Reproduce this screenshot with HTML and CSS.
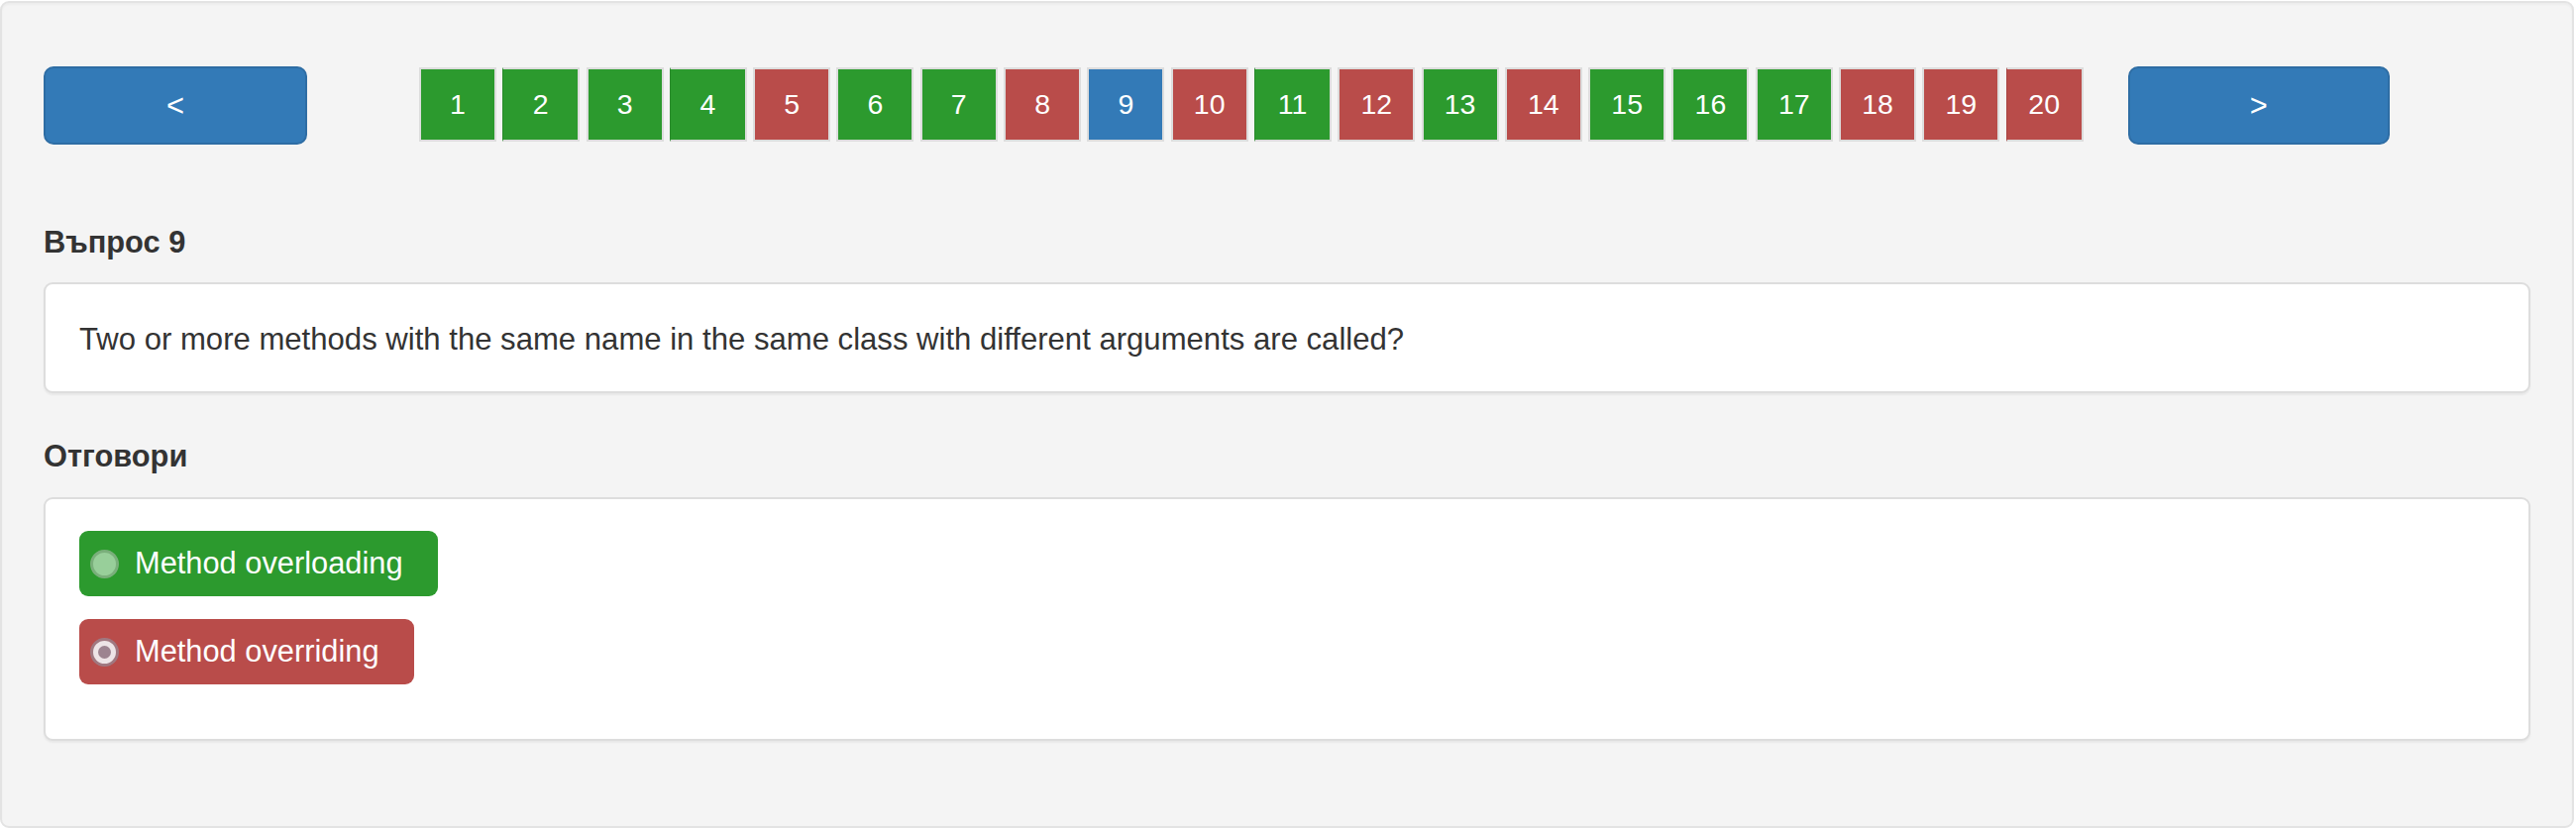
FILE: index.html
```html
<!DOCTYPE html>
<html lang="bg">
<head>
<meta charset="utf-8">
<title>Въпрос 9</title>
<link rel="stylesheet" href="styles.css">
</head>
<body>
<div class="well">
  <div class="nav">
    <button class="btn-nav">&lt;</button>
    <div class="pager">
      <span class="box ok">1</span>
      <span class="box ok edge">2</span>
      <span class="box ok">3</span>
      <span class="box ok edge">4</span>
      <span class="box bad">5</span>
      <span class="box ok">6</span>
      <span class="box ok">7</span>
      <span class="box bad">8</span>
      <span class="box cur">9</span>
      <span class="box bad">10</span>
      <span class="box ok edge">11</span>
      <span class="box bad">12</span>
      <span class="box ok">13</span>
      <span class="box bad">14</span>
      <span class="box ok">15</span>
      <span class="box ok">16</span>
      <span class="box ok">17</span>
      <span class="box bad">18</span>
      <span class="box bad">19</span>
      <span class="box bad edge">20</span>
    </div>
    <button class="btn-nav btn-next">&gt;</button>
  </div>

  <h5 class="heading heading-question">Въпрос 9</h5>
  <div class="panel question">Two or more methods with the same name in the same class with different arguments are called?</div>

  <h5 class="heading heading-answers">Отговори</h5>
  <div class="panel answers">
    <div class="answer"><span class="label ok"><span class="radio"></span><span class="label-text">Method overloading</span></span></div>
    <div class="answer"><span class="label bad"><span class="radio checked"></span><span class="label-text">Method overriding</span></span></div>
  </div>
</div>
</body>
</html>
```
FILE: styles.css
```css
html, body {
  margin: 0;
  padding: 0;
  background: #ffffff;
}

body {
  font-family: "Liberation Sans", Arial, sans-serif;
  font-size: 30.8px;
  color: #333333;
}

.well {
  margin: 1px 2px 0 0;
  background: #f4f4f4;
  border: 2px solid #e3e3e3;
  border-radius: 9px;
  padding: 64px 42px 42px 42px;
  box-shadow: inset 0 2px 2px rgba(0, 0, 0, 0.03);
}

.nav {
  display: flex;
  align-items: flex-start;
}

.btn-nav {
  width: 266px;
  height: 79px;
  background: #337ab7;
  border: 2px solid #2e6da4;
  border-radius: 10px;
  color: #ffffff;
  font-family: "Liberation Sans", Arial, sans-serif;
  font-size: 30.8px;
  padding: 0;
  flex: none;
}

.btn-next {
  width: 264px;
  margin-left: 45px;
}

.pager {
  display: flex;
  gap: 6.3px;
  margin-left: 113px;
  margin-top: 1px;
}

.box {
  box-sizing: border-box;
  width: 78px;
  height: 75px;
  border: 2px solid #dddddd;
  display: flex;
  align-items: center;
  justify-content: center;
  color: #ffffff;
  font-size: 28.5px;
}

.box.ok { background: #2c9a2e; }
.box.bad { background: #b94c4a; }
.box.cur { background: #337ab7; }
.box.ok.edge { border-left: 1px solid #2a8a2c; }
.box.bad.edge { border-left: 1px solid #a84442; }

.heading {
  font-size: 30.8px;
  line-height: 34px;
  font-weight: bold;
  color: #333333;
}

.heading-question {
  margin: 82px 0 23px 0;
}

.heading-answers {
  margin: 47px 0 24px 0;
}

.panel {
  background: #ffffff;
  border: 2px solid #dddddd;
  border-radius: 9px;
  box-shadow: 0 2px 2px rgba(0, 0, 0, 0.05);
}

.question {
  padding: 34px 34px 30px 34px;
  line-height: 44px;
  font-size: 31.1px;
}

.answers {
  padding: 32px 34px 55px 34px;
  margin-bottom: 44px;
}

.answer + .answer {
  margin-top: 23px;
}

.label {
  display: inline-flex;
  align-items: center;
  height: 66px;
  padding: 0 35px 0 11px;
  border-radius: 9px;
  color: #ffffff;
  font-size: 30.8px;
}

.label.ok { background: #2c9a2e; }
.label.bad { background: #b94c4a; }

.radio {
  box-sizing: border-box;
  width: 29px;
  height: 29px;
  border-radius: 50%;
  margin-right: 16px;
  flex: none;
  position: relative;
}

.label.ok .radio {
  background: #98cf9a;
  border: 3px solid #7aaf7b;
}

.radio.checked {
  background: #ede4e6;
  border: 3px solid #a07880;
}

.radio.checked::after {
  content: "";
  position: absolute;
  left: 50%;
  top: 50%;
  width: 13px;
  height: 13px;
  margin: -6.5px 0 0 -6.5px;
  border-radius: 50%;
  background: #9d8490;
}
```
